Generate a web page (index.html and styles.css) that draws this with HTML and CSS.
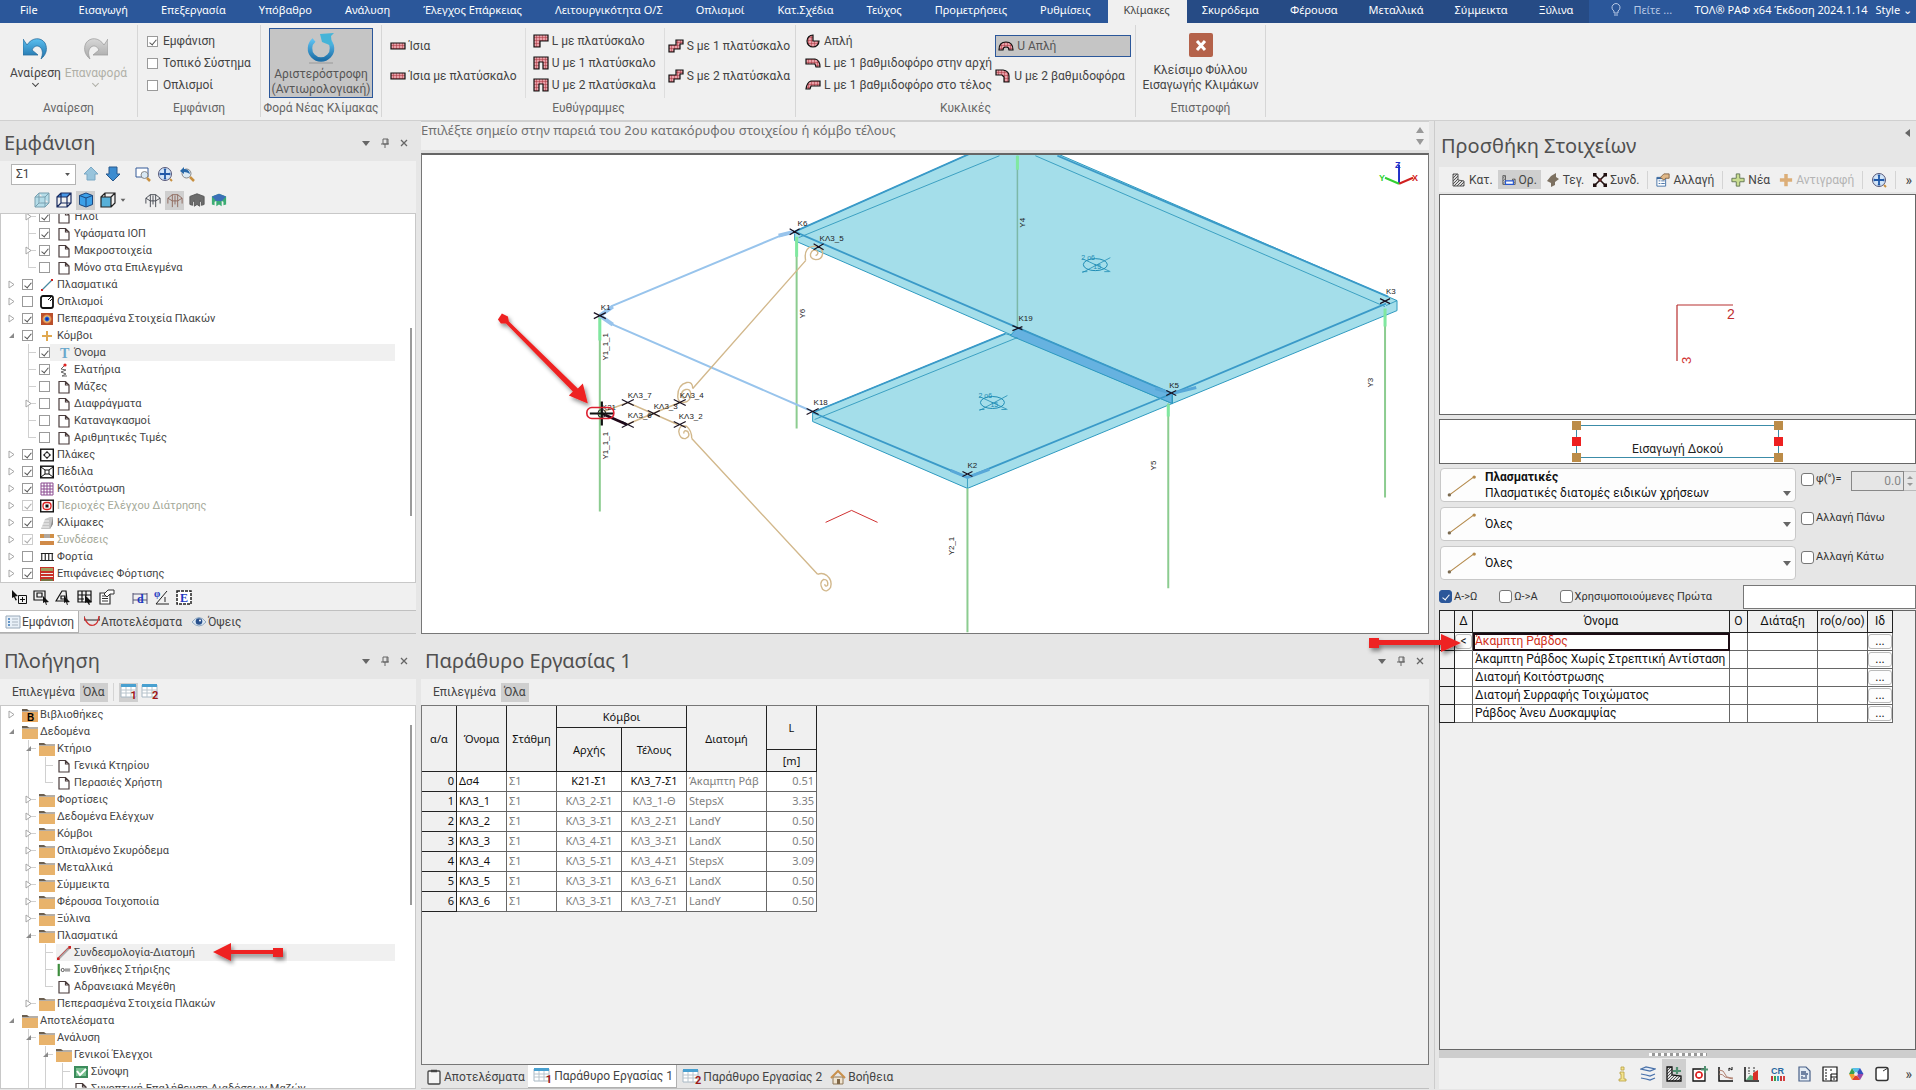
FILE: index.html
```html
<!DOCTYPE html>
<html lang="el">
<head>
    <meta charset="UTF-8">
    <meta name="viewport" content="width=device-width, initial-scale=1.0">
    <title>ΤΟΛ ΡΑΦ - Κλίμακες</title>
    <link rel="stylesheet" href="styles.css">
</head>
<body>
    <!-- gradients, patterns, filters -->
    <svg class="defs" width="0" height="0">
        <defs>
            <linearGradient id="g-blue" x1="0" y1="0" x2="0" y2="1"><stop offset="0" stop-color="#5cc0f0"/><stop offset="1" stop-color="#1d6fa8"/></linearGradient>
            <linearGradient id="g-gray" x1="0" y1="0" x2="0" y2="1"><stop offset="0" stop-color="#d8d8d8"/><stop offset="1" stop-color="#a8a8a8"/></linearGradient>
            <radialGradient id="g-heat"><stop offset="0" stop-color="#001a80"/><stop offset=".35" stop-color="#1d5be0"/><stop offset=".6" stop-color="#e8c070"/><stop offset="1" stop-color="#c84a28"/></radialGradient>
            <pattern id="p-brick" width="3" height="3" patternUnits="userSpaceOnUse"><rect width="3" height="3" fill="#e8a0a8"/><path d="M0 0h3M0 0v3" stroke="#a8323c" stroke-width="1"/></pattern>
            <pattern id="p-hatch" width="3" height="3" patternUnits="userSpaceOnUse"><rect width="3" height="3" fill="#ddd"/><path d="M0 3L3 0" stroke="#555"/></pattern>
            <filter id="shadow" x="-20%" y="-20%" width="140%" height="160%"><feDropShadow dx="2" dy="3" stdDeviation="2" flood-opacity=".45"/></filter>
        </defs>
    </svg>
    <!-- icon symbols -->
    <svg class="symbols">
        <symbol id="tw-closed" viewBox="0 0 9 9"><path d="M2 1v7l5-3.500z" fill="#fff" stroke="#a6a6a6"/></symbol>
        <symbol id="tw-open" viewBox="0 0 9 9"><path d="M7 2v5H2z" fill="#8a8a8a"/></symbol>
        <symbol id="doc" viewBox="0 0 14 14"><path d="M2 1.500h6.500l3.500 3.500v8H2zM8.500 1.500V5H12" fill="#fff" stroke="#4a3c3c" stroke-width="1.200"/></symbol>
        <symbol id="folder" viewBox="0 0 16 14"><path d="M0 3.500V1h5l2 1.500h9v1z" fill="#6b5f50"/><path d="M0 4h16v10H0z" fill="#e8b36c"/></symbol>
        <symbol id="folder-b" viewBox="0 0 16 14"><path d="M0 3.500V1h5l2 1.500h9v1z" fill="#6b5f50"/><path d="M0 4h16v10H0z" fill="#e8a860"/><text x="5" y="13" font-size="10" font-weight="bold" font-family="Liberation Sans">B</text></symbol>
        <symbol id="member" viewBox="0 0 14 14"><path d="M2 12L12 2" stroke="#4a8aa0" stroke-width="1.300"/><path d="M1 11h2v2H1zM11 1h2v2h-2z" fill="#c22"/></symbol>
        <symbol id="member2" viewBox="0 0 16 16"><path d="M2 14L14 2" stroke="#aaa" stroke-width="3"/><path d="M1 14L13 2" stroke="#c44" stroke-width="1"/><path d="M0 13h3v3H0zM13 0h3v3h-3z" fill="#c22"/></symbol>
        <symbol id="rebar" viewBox="0 0 14 14"><rect x="1" y="1" width="12" height="12" rx="2" fill="#fff" stroke="#111" stroke-width="1.800"/><path d="M8 5l4-4M10 6l2-2" stroke="#111"/></symbol>
        <symbol id="heat" viewBox="0 0 14 14"><rect x="1" y="1" width="12" height="12" fill="#b8502c"/><circle cx="7" cy="7" r="5" fill="url(#g-heat)"/></symbol>
        <symbol id="plus-o" viewBox="0 0 14 14"><path d="M7 2v10M2 7h10" stroke="#e0a850" stroke-width="2"/></symbol>
        <symbol id="letter-t" viewBox="0 0 14 14"><text x="3" y="12" font-size="14" font-weight="bold" fill="#6aa8cc" font-family="Liberation Serif">T</text></symbol>
        <symbol id="spring" viewBox="0 0 14 14"><path d="M7 3L4 6l5 1-5 2 5 2-4 2h5" fill="none" stroke="#666"/><circle cx="8" cy="2" r="1.600" fill="#d22"/></symbol>
        <symbol id="slab" viewBox="0 0 14 14"><rect x=".7" y="1.200" width="12.600" height="11.600" fill="#fff" stroke="#111" stroke-width="1.400"/><circle cx="7" cy="7" r="2.500" fill="none" stroke="#111"/><path d="M7 3v2M7 9v2M3 7h2M9 7h2" stroke="#111"/></symbol>
        <symbol id="foot" viewBox="0 0 14 14"><rect x=".7" y="1.200" width="12.600" height="11.600" fill="#fff" stroke="#111" stroke-width="1.400"/><path d="M1 2l4 3M13 2L9 5M1 12l4-3M13 12L9 9M5 5h4v4H5z" fill="none" stroke="#111"/></symbol>
        <symbol id="grid" viewBox="0 0 14 14"><path d="M1 1v12M4 1v12M7 1v12M10 1v12M13 1v12M1 1h12M1 4h12M1 7h12M1 10h12M1 13h12" stroke="#8a4a90"/></symbol>
        <symbol id="punch" viewBox="0 0 14 14"><rect x=".7" y="1.200" width="12.600" height="11.600" fill="#fff" stroke="#111" stroke-width="1.400"/><rect x="3" y="3.500" width="8" height="7" rx="3" fill="none" stroke="#d22" stroke-width="1.300"/><path d="M5.500 5.500h3v3h-3z" fill="#111"/></symbol>
        <symbol id="stair" viewBox="0 0 14 14"><path d="M1 13L5 3l5-2h3v7l-3 5z" fill="#c4c4c4"/><path d="M4 5h5M3 8h6M2 11h7" stroke="#f4f4f4"/><path d="M10 13l3-5V1z" fill="#8c8c8c"/></symbol>
        <symbol id="joint" viewBox="0 0 14 14"><path d="M0 1h14v4H0z" fill="#d09048"/><path d="M4 1h6v4H4z" fill="#b0a8a0"/><path d="M0 8h14v4H0z" fill="#d08a48"/></symbol>
        <symbol id="load" viewBox="0 0 16 14"><path d="M1 3h14M2 3v8M6 3v8M10 3v8M14 3v8M0 11h16" stroke="#222" stroke-width="1.300"/></symbol>
        <symbol id="loadsurf" viewBox="0 0 14 14"><path d="M0 0h14v14H0z" fill="#c83028"/><path d="M1 1h12v3H1z" fill="#a0a060"/><path d="M1 6h12v1H1zM1 9h12v1H1z" fill="#eee"/><path d="M1 12h12v2H1z" fill="#774"/></symbol>
        <symbol id="support" viewBox="0 0 16 16"><path d="M2 1v14" stroke="#3c8c3c" stroke-width="2.500"/><circle cx="6.500" cy="8" r="1.800" fill="none" stroke="#444"/><path d="M9 7h6M9 9h6" stroke="#555"/></symbol>
        <symbol id="okpic" viewBox="0 0 14 14"><path d="M0 1h14v12H0z" fill="#3c8c5c"/><path d="M2 3h10v8H2z" fill="#78c090"/><path d="M3 6l3 4 6-6" fill="none" stroke="#fff" stroke-width="2"/></symbol>
        <symbol id="undo" viewBox="0 0 24 24"><path d="M0 2l4 6C9 0 18 0 22 6c3 6 1 12-4 16 2-5 2-9-1-12-3-2-6-1-8 3l6 5H0z" fill="url(#g-blue)" stroke="#2b6ea0" stroke-width=".8"/></symbol>
        <symbol id="redo" viewBox="0 0 24 24"><path d="M24 2l-4 6C15 0 6 0 2 6c-3 6-1 12 4 16-2-5-2-9 1-12 3-2 6-1 8 3l-6 5h15z" fill="url(#g-gray)" stroke="#a0a0a0" stroke-width=".8"/></symbol>
        <symbol id="rotate" viewBox="0 0 32 32"><path d="M9 8a11 11 0 1 0 14 0" fill="none" stroke="url(#g-blue)" stroke-width="4.500"/><path d="M15 2l14-1-3 3 1 10-10-4z" fill="#46b4d8"/><path d="M4 31h24" stroke="#999" stroke-width="1"/></symbol>
        <symbol id="s-flat" viewBox="0 0 16 14"><path d="M1 4h14v6H1z" fill="url(#p-brick)" stroke="#111" stroke-width="1.200"/></symbol>
        <symbol id="s-l" viewBox="0 0 16 14"><path d="M1 1h14v6H7v6H1z" fill="url(#p-brick)" stroke="#111" stroke-width="1.200"/></symbol>
        <symbol id="s-u" viewBox="0 0 16 14"><path d="M1 1h14v12h-5V6H6v7H1z" fill="url(#p-brick)" stroke="#111" stroke-width="1.200"/></symbol>
        <symbol id="s-s" viewBox="0 0 16 14"><path d="M15 1H8v5H1v7h5v-3h6V5h3z" fill="url(#p-brick)" stroke="#111" stroke-width="1.200"/></symbol>
        <symbol id="s-c" viewBox="0 0 16 14"><path d="M8 1a6 6 0 1 0 6 6H8z" fill="url(#p-brick)" stroke="#111" stroke-width="1.200"/></symbol>
        <symbol id="s-cl" viewBox="0 0 16 14"><path d="M1 3h9q5 1 5 8h-4l-1-3H1z" fill="url(#p-brick)" stroke="#111" stroke-width="1.200"/></symbol>
        <symbol id="s-cr" viewBox="0 0 16 14"><path d="M15 3H6Q2 4 1 11h4l1-3h9z" fill="url(#p-brick)" stroke="#111" stroke-width="1.200"/></symbol>
        <symbol id="s-arc" viewBox="0 0 16 14"><path d="M1 11q0-8 7-8t7 8h-4q0-3-3-3t-3 3z" fill="url(#p-brick)" stroke="#111" stroke-width="1.200"/></symbol>
        <symbol id="s-q" viewBox="0 0 16 14"><path d="M1 1h7q6 1 6 6v6H9V8L7 6H1z" fill="url(#p-brick)" stroke="#111" stroke-width="1.200"/></symbol>
        <symbol id="close" viewBox="0 0 24 24"><rect width="24" height="24" rx="2" fill="#b4624a"/><path d="M8 8l8 9M16 8l-8 9" stroke="#fff" stroke-width="3"/></symbol>
        <symbol id="bulb" viewBox="0 0 12 14"><path d="M4 10V8a4 4 0 1 1 4 0v2zM4 12h4" fill="none" stroke="#b8c8e4"/></symbol>
        <symbol id="caret" viewBox="0 0 10 10"><path d="M1 3h8L5 8z" fill="#666"/></symbol>
        <symbol id="pin" viewBox="0 0 10 10"><path d="M3 1h5v5H3zM1 6h8M5 6v4M7 1v5" fill="none" stroke="#666"/></symbol>
        <symbol id="x" viewBox="0 0 10 10"><path d="M2 2l6 6M8 2L2 8" stroke="#666" stroke-width="1.300"/></symbol>
        <symbol id="up" viewBox="0 0 16 16"><path d="M8 1l7 7h-3v6H4V8H1z" fill="#98c4dc" stroke="#7aa8c4"/></symbol>
        <symbol id="down" viewBox="0 0 16 16"><path d="M8 15L1 8h3V1h8v7h3z" fill="#3c8cd0" stroke="#28588c"/></symbol>
        <symbol id="zoomwin" viewBox="0 0 16 16"><path d="M1 2h12v9H1z" fill="#fff" stroke="#345a98"/><circle cx="9.500" cy="9" r="3.500" fill="#d8e8f4" stroke="#888"/><path d="M12 12l3 3" stroke="#c89040" stroke-width="2.500"/></symbol>
        <symbol id="zoomall" viewBox="0 0 16 16"><circle cx="8" cy="8" r="6.500" fill="#d0e4f8" stroke="#557"/><path d="M8 3v10M3 8h10" stroke="#2058a8" stroke-width="1.800"/><path d="M6.500 4L8 2l1.500 2zM6.500 12L8 14l1.500-2zM4 6.500L2 8l2 1.500zM12 6.500L14 8l-2 1.500z" fill="#2058a8"/><path d="M13 13l2 2" stroke="#c89040" stroke-width="2"/></symbol>
        <symbol id="zoomprev" viewBox="0 0 16 16"><circle cx="7.500" cy="7.500" r="4.500" fill="#dceaf4" stroke="#888"/><path d="M11 11l4 4" stroke="#c89040" stroke-width="2.500"/><path d="M1 5l4-4v2q5 0 6 5-3-2-6-2v2z" fill="#2868a8"/></symbol>
        <symbol id="cube-g" viewBox="0 0 16 16"><path d="M1 5h10v10H1zM1 5l4-4h10v10l-4 4M11 5l4-4M5 1v10H15M5 11l-4 4" fill="#b4dce8" stroke="#78a0b0"/></symbol>
        <symbol id="cube-w" viewBox="0 0 16 16"><path d="M1 5l4-4h10l-4 4z" fill="#4898e8"/><path d="M1 5h10v10H1zM1 5l4-4h10v10l-4 4M11 5l4-4M5 1v10H15M5 11l-4 4" fill="none" stroke="#1a2c60" stroke-width="1.200"/></symbol>
        <symbol id="cube-b" viewBox="0 0 16 16"><path d="M8 1l6.500 2.500v9L8 15l-6.500-2.500v-9z" fill="#3ca0e8" stroke="#1c4880"/><path d="M1.500 3.500L8 6l6.500-2.500M8 6v9" fill="none" stroke="#1c4880"/></symbol>
        <symbol id="cube-f" viewBox="0 0 16 16"><path d="M1 5h10v10H1z" fill="#58b0d8"/><path d="M1 5h10v10H1zM1 5l4-4h10v10l-4 4M11 5l4-4M5 1v4" fill="none" stroke="#222" stroke-width="1.200"/></symbol>
        <symbol id="frame" viewBox="0 0 18 16"><path d="M1 6l5-4h6l5 4-5 3H6zM1 6v6M6 9v7M12 9v7M17 6v6M6 2v7M12 2v7M9 3v10" fill="none" stroke="#3c4048"/></symbol>
        <symbol id="frame-r" viewBox="0 0 18 16"><path d="M1 6l5-4h6l5 4-5 3H6zM1 6v6M6 9v7M12 9v7M17 6v6M6 2v7M12 2v7M9 3v10" fill="none" stroke="#8c6458"/></symbol>
        <symbol id="solid" viewBox="0 0 18 16"><path d="M1 4l8-3 8 3v9l-3 1v-4l-2-1v6l-3-2-3 2V9l-2 1v4l-3-1z" fill="#6c6c6c" stroke="#555"/></symbol>
        <symbol id="solid-g" viewBox="0 0 18 16"><path d="M1 4l8-3 8 3v9l-3 1v-4l-2-1v6l-3-2-3 2V9l-2 1v4l-3-1z" fill="#3cac74"/><path d="M1 4l8-3 8 3-5 5H6z" fill="#3c70b8"/></symbol>
        <symbol id="sel1" viewBox="0 0 16 16"><path d="M1 1l6 6-3 .5L6 11 4.500 11.500 3 8 1 9z" fill="#111"/><path d="M7.500 6.500h8v8h-8zM11.500 8v5M9 10.500h5" fill="none" stroke="#111"/></symbol>
        <symbol id="sel2" viewBox="0 0 16 16"><path d="M1 2h11v9H1zM4 4h5v4H4z" fill="none" stroke="#111" stroke-width="1.200"/><path d="M10 7l6 6-3 .5 1 2-1 .5-1-3-2 1z" fill="#111"/></symbol>
        <symbol id="sel3" viewBox="0 0 16 16"><path d="M1 12L7 2h4l1 10zM6 7h4v3H6z" fill="none" stroke="#111" stroke-width="1.200"/><path d="M9 7l6 6-3 .5 1 2-1 .5-1-3-2 1z" fill="#111"/></symbol>
        <symbol id="sel4" viewBox="0 0 16 16"><path d="M1 2h13v11H1zM5 2v11M9 2v5M1 6h13M1 10h6" fill="none" stroke="#111" stroke-width="1.200"/><path d="M8 6l7 7-3 .5 1 2-1 .5-2-3-2 1z" fill="#111"/></symbol>
        <symbol id="props" viewBox="0 0 16 16"><path d="M1 4h10v11H1zM3 7h6M3 9.500h6M3 12h6" fill="#fff" stroke="#333" stroke-width="1.200"/><path d="M5 5l4-4h6v4h-4l-3 3z" fill="#fff" stroke="#333"/></symbol>
        <symbol id="props-c" viewBox="0 0 16 16"><path d="M1 5h10v10H1z" fill="#fff" stroke="#3868a0"/><path d="M1 5h10v2H1z" fill="#3868a0"/><path d="M3 9h2M6 9h4M3 12h2M6 12h4" stroke="#3868a0"/><path d="M5 5l4-4h6v5h-4l-2 2z" fill="#e0b888" stroke="#806040"/></symbol>
        <symbol id="dim" viewBox="0 0 16 16"><path d="M1 4v11M15 4v11M1 5h14M1 11h14" stroke="#557" fill="none"/><text x="5" y="14" font-size="12" font-weight="bold" fill="#2038c0" font-family="Liberation Serif">d</text></symbol>
        <symbol id="phi" viewBox="0 0 16 16"><text x="0" y="8" font-size="10" font-weight="bold" fill="#2038c0" font-family="Liberation Serif">φ</text><path d="M2 15L13 2M2 15h13M11 8v5" stroke="#222"/></symbol>
        <symbol id="ebox" viewBox="0 0 16 16"><path d="M1 2h14v13H1z" fill="#fff" stroke="#222" stroke-width="1.500" stroke-dasharray="3 1"/><text x="4" y="13" font-size="12" font-weight="bold" fill="#2038c0" font-family="Liberation Serif">E</text></symbol>
        <symbol id="list" viewBox="0 0 16 14"><path d="M1 1h14v12H1z" fill="#e8f0f8" stroke="#98a8b8"/><path d="M3 4h2M3 7h2M3 10h2" stroke="#3878b8" stroke-width="1.500"/><path d="M7 4h6M7 7h6M7 10h6" stroke="#a8b4c0"/></symbol>
        <symbol id="moment" viewBox="0 0 16 14"><path d="M0 1v4h16V1" fill="none" stroke="#222"/><path d="M0 2q4 10 10 8 4-1 5-9" fill="none" stroke="#d03030" stroke-width="1.300"/></symbol>
        <symbol id="eye" viewBox="0 0 16 14"><path d="M1 7q7-9 14 0-7 8-14 0z" fill="#dce8f4" stroke="#90a8c0"/><circle cx="8" cy="6.500" r="3.300" fill="#28508c"/><circle cx="9" cy="5.500" r="1" fill="#fff"/></symbol>
        <symbol id="tbl" viewBox="0 0 18 18"><path d="M1 2h15v12H1z" fill="#fff" stroke="#a8b8c4"/><path d="M1 1h15v3H1z" fill="#48a0d0"/><path d="M1 7h15M1 10h15M6 4v10M11 4v10" stroke="#b8c4cc"/></symbol>
        <symbol id="home" viewBox="0 0 16 16"><path d="M3 8h10v7H3z" fill="#f0e4d0" stroke="#907858"/><path d="M1 9l7-7 7 7" fill="none" stroke="#c8904c" stroke-width="2"/><path d="M7 10h3v5H7z" fill="#806848"/></symbol>
        <symbol id="col" viewBox="0 0 14 14"><path d="M1 1h5v6l6 1v5H1z" fill="url(#p-hatch)" stroke="#555"/></symbol>
        <symbol id="hor" viewBox="0 0 16 14"><path d="M1 2h3v10H1zM12 6h3v6h-3z" fill="url(#p-hatch)" stroke="#555"/><path d="M4 12V8h9v4z" fill="#fff" stroke="#2858d0" stroke-width="1.300"/></symbol>
        <symbol id="roof" viewBox="0 0 14 14"><path d="M5 3l5-3v4l3 2-4 3v3l-4 2v-4L1 8z" fill="#7c7060"/></symbol>
        <symbol id="conn" viewBox="0 0 16 16"><path d="M2 2l12 12M14 2L2 14" stroke="#201010" stroke-width="1.800"/><path d="M0 0h4v4H0zM12 0h4v4h-4zM0 12h4v4H0zM12 12h4v4h-4z" fill="#201010"/><circle cx="8" cy="8" r="2" fill="#602020"/></symbol>
        <symbol id="add" viewBox="0 0 16 16"><path d="M6 1h4v5h5v4h-5v5H6v-5H1V6h5z" fill="#c8dc90" stroke="#5c7050"/></symbol>
        <symbol id="add-o" viewBox="0 0 16 16"><path d="M6 1h4v5h5v4h-5v5H6v-5H1V6h5z" fill="#dcae78"/></symbol>
        <symbol id="info" viewBox="0 0 16 16"><path d="M7 1h3v3H7zM6 6h4v7h2v2H5v-2h2V8H6z" fill="#f4e490" stroke="#b8a040" stroke-width=".8"/></symbol>
        <symbol id="layers" viewBox="0 0 16 16"><path d="M1 3l5-2 9 2-5 2zM1 8l5 1 4 1 5-2M1 12l5 1 4 1 5-2" fill="#e4ecf8" stroke="#4870a8" stroke-width="1.200"/></symbol>
        <symbol id="sec-add" viewBox="0 0 16 16"><path d="M1 1h5v8l9 1v5H1z" fill="url(#p-hatch)" stroke="#111" stroke-width="1.300"/><path d="M11 1v7M7 5h8" stroke="#509070" stroke-width="2.200"/></symbol>
        <symbol id="slab-add" viewBox="0 0 16 16"><path d="M1 3h12v12H1z" fill="#fff" stroke="#111" stroke-width="1.300"/><circle cx="7" cy="9" r="3" fill="none" stroke="#d22" stroke-width="1.500"/><path d="M7 5v2M7 11v2M3 9h2M9 9h2" stroke="#d22"/><path d="M13 0v7M9 3.500h7" stroke="#509070" stroke-width="2"/></symbol>
        <symbol id="curve" viewBox="0 0 16 16"><path d="M1 1v14h14" fill="none" stroke="#111" stroke-width="1.500"/><path d="M1 4q5 0 6 4t8 4M1 8q4 0 6 3l8 2" fill="none" stroke="#b08070"/><path d="M11 5V2l3 2V1" fill="none" stroke="#111"/></symbol>
        <symbol id="chart" viewBox="0 0 16 16"><path d="M1 1v14h14" fill="none" stroke="#111" stroke-width="1.500"/><path d="M2 14l4-5 3 1v4z" fill="#60b080"/><path d="M9 7l5-3v10H9z" fill="#d83028"/><path d="M5 1v7M10 1v5" stroke="#333" stroke-dasharray="2 1"/></symbol>
        <symbol id="cr" viewBox="0 0 16 16"><text x="1" y="8" font-size="9" font-weight="bold" fill="#2868a0" font-family="Liberation Sans">CR</text><path d="M1 10h2v5H1zM10 10h2v5h-2z" fill="#c83838"/><path d="M4 10h2v5H4z" fill="#38a048"/><path d="M7 10h2v5H7z" fill="#38a0c0"/><path d="M13 10h2v5h-2z" fill="#d84040"/></symbol>
        <symbol id="page" viewBox="0 0 16 16"><path d="M3 1h7l4 4v10H3z" fill="#e4ecf4" stroke="#486088" stroke-width="1.200"/><path d="M5 6h5M5 8h7M6 13v-3M8 13v-2M10 13V9" stroke="#486088" stroke-width="1.300"/></symbol>
        <symbol id="sheet" viewBox="0 0 16 16"><path d="M1 1h14v14H1zM9 8v7M9 8h6M9 11h6" fill="#fff" stroke="#111" stroke-width="1.200"/><path d="M3 4h3M8 4h3M3 7h3M3 10h3M3 13h3M11 13h3" stroke="#111" stroke-dasharray="2 1"/></symbol>
        <symbol id="color" viewBox="0 0 16 16"><path d="M8 8L1 8l3-6z" fill="#38a050"/><path d="M8 8L4 2h8z" fill="#58c0e8"/><path d="M8 8l4-6 3.500 6z" fill="#3050c0"/><path d="M8 8h7.500L12 14z" fill="#9848a8"/><path d="M8 8l4 6H4z" fill="#e04030"/><path d="M8 8l-4 6L1 8z" fill="#f0a030"/><circle cx="8" cy="8" r="2" fill="#fff" opacity=".8"/></symbol>
        <symbol id="box" viewBox="0 0 16 16"><rect x="2" y="1.500" width="12" height="13" rx="2" fill="#fff" stroke="#333" stroke-width="1.500"/><path d="M9 5l5-3" stroke="#333"/></symbol>
        <symbol id="clipboard" viewBox="0 0 16 16"><rect x="2" y="2" width="12" height="13" rx="1" fill="#f4f4f4" stroke="#444" stroke-width="1.300"/><path d="M5 2h6" stroke="#444" stroke-width="2.500"/></symbol>
        <symbol id="diag" viewBox="0 0 32 24"><path d="M2 22L29 2" stroke="#b48a4c" stroke-width="1.300"/><circle cx="2.500" cy="21.500" r="1.800" fill="#7a6a50"/><circle cx="29" cy="2.500" r="1.800" fill="#b48a4c"/></symbol>
        <symbol id="red-arrow" viewBox="0 0 96 24"><path d="M2 7h10v2h62V3l20 9-20 9v-7H12v3H2z" fill="#ee2222"/></symbol>
        <symbol id="slabmark" viewBox="0 0 32 20"><ellipse cx="15" cy="11" rx="12" ry="6" fill="none" stroke="#1e8cb4"/><path d="M2 19L30 4M2 5l28 13M2 18h5M24 18h5" stroke="#1e8cb4" stroke-width=".8"/><text x="1" y="6" font-size="7" fill="#1e8cb4" font-family="Liberation Sans">2 ο6</text><text x="13" y="15" font-size="7" fill="#1e8cb4" font-family="Liberation Sans">15</text></symbol>
    </svg>

    <nav class="tabs">
        <a href="#">File</a>
        <a href="#">Εισαγωγή</a>
        <a href="#">Επεξεργασία</a>
        <a href="#">Υπόβαθρο</a>
        <a href="#">Ανάλυση</a>
        <a href="#">Έλεγχος Επάρκειας</a>
        <a href="#">Λειτουργικότητα Ο/Σ</a>
        <a href="#">Οπλισμοί</a>
        <a href="#">Κατ.Σχέδια</a>
        <a href="#">Τεύχος</a>
        <a href="#">Προμετρήσεις</a>
        <a href="#">Ρυθμίσεις</a>
        <a href="#" class="active">Κλίμακες</a>
        <a href="#" class="ctx">Σκυρόδεμα</a>
        <a href="#" class="ctx">Φέρουσα</a>
        <a href="#" class="ctx">Μεταλλικά</a>
        <a href="#" class="ctx">Σύμμεικτα</a>
        <a href="#" class="ctx">Ξύλινα</a>
        <span class="tell-me"><svg class="i14"><use href="#bulb"/></svg>Πείτε ...</span>
        <span class="app-name">ΤΟΛ® ΡΑΦ x64 Έκδοση 2024.1.14</span>
        <button class="style-btn">Style ⌄</button>
    </nav>

    <section class="ribbon">
        <div class="group g-undo">
            <div class="group-body">
                <button class="big"><svg class="i24"><use href="#undo"/></svg>Αναίρεση<span class="chev"></span></button>
                <button class="big" disabled><svg class="i24"><use href="#redo"/></svg>Επαναφορά<span class="chev"></span></button>
            </div>
            <h3>Αναίρεση</h3>
        </div>
        <div class="group g-view">
            <div class="group-body">
                <div class="stack">
                    <label><input type="checkbox" checked>Εμφάνιση</label>
                    <label><input type="checkbox">Τοπικό Σύστημα</label>
                    <label><input type="checkbox">Οπλισμοί</label>
                </div>
            </div>
            <h3>Εμφάνιση</h3>
        </div>
        <div class="group g-dir">
            <div class="group-body">
                <button class="big pressed"><svg class="i32"><use href="#rotate"/></svg>Αριστερόστροφη<br>(Αντιωρολογιακή)</button>
            </div>
            <h3>Φορά Νέας Κλίμακας</h3>
        </div>
        <div class="group g-straight">
            <div class="group-body">
                <div class="stack two">
                    <button class="small"><svg class="i16"><use href="#s-flat"/></svg>Ίσια</button>
                    <button class="small"><svg class="i16"><use href="#s-flat"/></svg>Ίσια με πλατύσκαλο</button>
                </div>
                <div class="stack split">
                    <button class="small"><svg class="i16"><use href="#s-l"/></svg>L με πλατύσκαλο</button>
                    <button class="small"><svg class="i16"><use href="#s-u"/></svg>U με 1 πλατύσκαλο</button>
                    <button class="small"><svg class="i16"><use href="#s-u"/></svg>U με 2 πλατύσκαλα</button>
                </div>
                <div class="stack two split">
                    <button class="small"><svg class="i16"><use href="#s-s"/></svg>S με 1 πλατύσκαλο</button>
                    <button class="small"><svg class="i16"><use href="#s-s"/></svg>S με 2 πλατύσκαλα</button>
                </div>
            </div>
            <h3>Ευθύγραμμες</h3>
        </div>
        <div class="group g-round">
            <div class="group-body">
                <div class="stack">
                    <button class="small"><svg class="i16"><use href="#s-c"/></svg>Απλή</button>
                    <button class="small"><svg class="i16"><use href="#s-cl"/></svg>L με 1 βαθμιδοφόρο στην αρχή</button>
                    <button class="small"><svg class="i16"><use href="#s-cr"/></svg>L με 1 βαθμιδοφόρο στο τέλος</button>
                </div>
                <div class="stack two grow">
                    <button class="small pressed"><svg class="i16"><use href="#s-arc"/></svg>U Απλή</button>
                    <button class="small"><svg class="i16"><use href="#s-q"/></svg>U με 2 βαθμιδοφόρα</button>
                </div>
            </div>
            <h3>Κυκλικές</h3>
        </div>
        <div class="group g-back">
            <div class="group-body">
                <button class="big"><svg class="i24"><use href="#close"/></svg>Κλείσιμο Φύλλου<br>Εισαγωγής Κλιμάκων</button>
            </div>
            <h3>Επιστροφή</h3>
        </div>
    </section>

    <main class="workspace">
        <!-- left: display panel -->
        <section class="panel display">
            <header class="title"><h2>Εμφάνιση</h2><button aria-label="Μενού"><svg class="i10"><use href="#caret"/></svg></button><button aria-label="Καρφίτσωμα"><svg class="i10"><use href="#pin"/></svg></button><button aria-label="Κλείσιμο"><svg class="i10"><use href="#x"/></svg></button></header>
            <div class="toolbar level-bar">
                <select aria-label="Στάθμη"><option>Σ1</option></select>
                <button aria-label="Πάνω"><svg class="i16"><use href="#up"/></svg></button>
                <button aria-label="Κάτω"><svg class="i16"><use href="#down"/></svg></button>
                <i class="space"></i>
                <button aria-label="Ζουμ παράθυρο"><svg class="i16"><use href="#zoomwin"/></svg></button>
                <button aria-label="Ζουμ όλα"><svg class="i16"><use href="#zoomall"/></svg></button>
                <button aria-label="Προηγούμενο ζουμ"><svg class="i16"><use href="#zoomprev"/></svg></button>
            </div>
            <div class="toolbar cube-bar">
                <button aria-label="Διαφανές"><svg class="i16"><use href="#cube-g"/></svg></button>
                <button aria-label="Σύρμα"><svg class="i16"><use href="#cube-w"/></svg></button>
                <button aria-label="Στερεό" class="on"><svg class="i16"><use href="#cube-b"/></svg></button>
                <button aria-label="Όψη"><svg class="i16"><use href="#cube-f"/></svg></button>
                <svg class="i6"><use href="#caret"/></svg>
                <i class="space"></i>
                <button aria-label="Πλαίσιο"><svg class="i16"><use href="#frame"/></svg></button>
                <button aria-label="Πλαίσιο με κόμβους" class="on"><svg class="i16"><use href="#frame-r"/></svg></button>
                <button aria-label="Όγκοι"><svg class="i16"><use href="#solid"/></svg></button>
                <button aria-label="Φωτορεαλιστικό"><svg class="i16"><use href="#solid-g"/></svg></button>
            </div>
            <div class="tree checks">
                <ul>
                    <li>
                        <ul>
                            <li><label class="node"><svg class="tw"><use href="#tw-closed"/></svg><input type="checkbox" checked><span class="text"><svg class="i14"><use href="#doc"/></svg>Ήλοι</span></label></li>
                            <li><label class="node"><i class="tw"></i><input type="checkbox" checked><span class="text"><svg class="i14"><use href="#doc"/></svg>Υφάσματα ΙΟΠ</span></label></li>
                            <li><label class="node"><svg class="tw"><use href="#tw-closed"/></svg><input type="checkbox" checked><span class="text"><svg class="i14"><use href="#doc"/></svg>Μακροστοιχεία</span></label></li>
                            <li><label class="node"><i class="tw"></i><input type="checkbox"><span class="text"><svg class="i14"><use href="#doc"/></svg>Μόνο στα Επιλεγμένα</span></label></li>
                        </ul>
                    </li>
                    <li><label class="node"><svg class="tw"><use href="#tw-closed"/></svg><input type="checkbox" checked><span class="text"><svg class="i14"><use href="#member"/></svg>Πλασματικά</span></label></li>
                    <li><label class="node"><svg class="tw"><use href="#tw-closed"/></svg><input type="checkbox"><span class="text"><svg class="i14"><use href="#rebar"/></svg>Οπλισμοί</span></label></li>
                    <li><label class="node"><svg class="tw"><use href="#tw-closed"/></svg><input type="checkbox" checked><span class="text"><svg class="i14"><use href="#heat"/></svg>Πεπερασμένα Στοιχεία Πλακών</span></label></li>
                    <li><label class="node"><svg class="tw"><use href="#tw-open"/></svg><input type="checkbox" checked><span class="text"><svg class="i14"><use href="#plus-o"/></svg>Κόμβοι</span></label>
                        <ul>
                            <li><label class="node selected"><i class="tw"></i><input type="checkbox" checked><span class="text"><svg class="i14"><use href="#letter-t"/></svg>Όνομα</span></label></li>
                            <li><label class="node"><i class="tw"></i><input type="checkbox" checked><span class="text"><svg class="i14"><use href="#spring"/></svg>Ελατήρια</span></label></li>
                            <li><label class="node"><i class="tw"></i><input type="checkbox"><span class="text"><svg class="i14"><use href="#doc"/></svg>Μάζες</span></label></li>
                            <li><label class="node"><svg class="tw"><use href="#tw-closed"/></svg><input type="checkbox"><span class="text"><svg class="i14"><use href="#doc"/></svg>Διαφράγματα</span></label></li>
                            <li><label class="node"><i class="tw"></i><input type="checkbox"><span class="text"><svg class="i14"><use href="#doc"/></svg>Καταναγκασμοί</span></label></li>
                            <li><label class="node"><i class="tw"></i><input type="checkbox"><span class="text"><svg class="i14"><use href="#doc"/></svg>Αριθμητικές Τιμές</span></label></li>
                        </ul>
                    </li>
                    <li><label class="node"><svg class="tw"><use href="#tw-closed"/></svg><input type="checkbox" checked><span class="text"><svg class="i14"><use href="#slab"/></svg>Πλάκες</span></label></li>
                    <li><label class="node"><svg class="tw"><use href="#tw-closed"/></svg><input type="checkbox" checked><span class="text"><svg class="i14"><use href="#foot"/></svg>Πέδιλα</span></label></li>
                    <li><label class="node"><svg class="tw"><use href="#tw-closed"/></svg><input type="checkbox" checked><span class="text"><svg class="i14"><use href="#grid"/></svg>Κοιτόστρωση</span></label></li>
                    <li><label class="node off"><svg class="tw"><use href="#tw-closed"/></svg><input type="checkbox" checked disabled><span class="text"><svg class="i14"><use href="#punch"/></svg>Περιοχές Ελέγχου Διάτρησης</span></label></li>
                    <li><label class="node"><svg class="tw"><use href="#tw-closed"/></svg><input type="checkbox" checked><span class="text"><svg class="i14"><use href="#stair"/></svg>Κλίμακες</span></label></li>
                    <li><label class="node off"><svg class="tw"><use href="#tw-closed"/></svg><input type="checkbox" checked disabled><span class="text"><svg class="i14"><use href="#joint"/></svg>Συνδέσεις</span></label></li>
                    <li><label class="node"><svg class="tw"><use href="#tw-closed"/></svg><input type="checkbox"><span class="text"><svg class="i14"><use href="#load"/></svg>Φορτία</span></label></li>
                    <li><label class="node"><svg class="tw"><use href="#tw-closed"/></svg><input type="checkbox" checked><span class="text"><svg class="i14"><use href="#loadsurf"/></svg>Επιφάνειες Φόρτισης</span></label></li>
                </ul>
                <i class="thumb"></i>
            </div>
            <div class="toolbar select-bar">
                <button aria-label="Επιλογή"><svg class="i16"><use href="#sel1"/></svg></button>
                <button aria-label="Επιλογή παραθύρου"><svg class="i16"><use href="#sel2"/></svg></button>
                <button aria-label="Επιλογή πολυγώνου"><svg class="i16"><use href="#sel3"/></svg></button>
                <button aria-label="Επιλογή πίνακα"><svg class="i16"><use href="#sel4"/></svg></button>
                <button aria-label="Ιδιότητες"><svg class="i16"><use href="#props"/></svg></button>
                <i class="space"></i>
                <button aria-label="Απόσταση"><svg class="i16"><use href="#dim"/></svg></button>
                <button aria-label="Γωνία"><svg class="i16"><use href="#phi"/></svg></button>
                <button aria-label="Εμβαδόν"><svg class="i16"><use href="#ebox"/></svg></button>
            </div>
            <div class="bottom-tabs">
                <button class="active"><svg class="i16"><use href="#list"/></svg>Εμφάνιση</button>
                <button><svg class="i16"><use href="#moment"/></svg>Αποτελέσματα</button>
                <button><svg class="i16"><use href="#eye"/></svg>Όψεις</button>
            </div>
        </section>

        <!-- center: model view -->
        <section class="model">
            <div class="prompt"><span>Επιλέξτε σημείο στην παρειά του 2ου κατακόρυφου στοιχείου ή κόμβο τέλους</span><span class="spin"><i class="tri-up"></i><i class="tri-down"></i></span></div>
            <div class="viewport">
                <svg viewBox="421 155 1007 477">
                    <!-- slabs -->
                    <g stroke="#2e9ac0" stroke-width="1">
                        <path d="M794 231L976 150H1050L1397 300V310L1172 403L1017 337L794 240z" fill="#a4deea"/>
                        <path d="M812 412L1005 333L1017 337L1172 403L967 488L812 421z" fill="#a4deea"/>
                        <path d="M1017 327L1172 393V403L1010 335z" fill="#66b2e0"/>
                        <path d="M798 237L999 155M1035 155L1385 306M814 419L1017 337M1172 393V403M1386 305L1397 300M967 477V488" fill="none" stroke="#2290b8" stroke-width=".8"/>
                        <path d="M794 231L976 150M1057 155L1388 296M794 231L1017 327L1172 393L1386 303M812 412L1005 333M812 412L967 477L1172 393" fill="none" stroke="#3a9ac8" stroke-width="1.800"/>
                        <path d="M950 470l17 7 22-8M1155 388l17 5 24-6" fill="none" stroke="#58a8d8" stroke-width="3"/>
                    </g>
                    <!-- columns -->
                    <path d="M599 315V511M796 240V428M967 488V632M1168 403V588M1385 312V497" stroke="#8ccc90" stroke-width="2"/>
                    <path d="M1017 155V327" stroke="#7cb8a8" stroke-width="1.500"/>
                    <path d="M599 316v24M796 236v20M1168 404v12M1385 308v18M1017 155v14" stroke="#80e8a0" stroke-width="3"/>
                    <!-- beams -->
                    <path d="M599 315l13-10 168-70 14-4M599 315l13 9 200 87" fill="none" stroke="#98c4ec" stroke-width="2"/>
                    <path d="M599 315l13-9M599 315l13 9M778 235l16-4" stroke="#98c4ec" stroke-width="4"/>
                    <!-- stair members -->
                    <g fill="none" stroke="#d2b88c" stroke-width="1.400">
                        <path d="M603 411L627 402L652 413L677 424M626 424L652 413L679 402M692 388L805 260M691 438L817 574"/>
                        <path d="M692 388q0-7-6-6-9 2-9 14 0 6 6 6 7-1 7-8 0-6-5-5-5 1-4 7 2 3 4 0"/>
                        <path d="M805 260q-2-12 6-14 10-2 11 6 0 7-7 7-6-1-5-6 2-5 6-3 3 3-1 5"/>
                        <path d="M691 438q0-8-5-12-7-3-8 5 1 8 7 7 5-2 2-7-4-2-4 2"/>
                        <path d="M817 574q5-2 9 1 6 5 4 12-4 6-8 2-4-7 1-10 5 0 4 6-2 2-3-1"/>
                    </g>
                    <path d="M601 413L626 424" stroke="#200818" stroke-width="2.500"/>
                    <path d="M825 522L851 510L877 522" fill="none" stroke="#d03030"/>
                    <!-- nodes -->
                    <path d="M593 312l12 6M593 318l12-6M789 228l10 6M789 234l10-6M806 408l12 6M806 414l12-6M621 399l12 6M621 405l12-6M621 421l12 6M621 427l12-6M647 410l12 6M647 416l12-6M673 399l12 6M673 405l12-6M673 421l12 6M673 427l12-6M813 243l10 6M813 249l10-6M962 471l10 5M962 476l10-5M1380 298l10 5M1380 303l10-5M1012 325l10 4M1012 330l10-4M1166 390l10 5M1166 395l10-5" stroke="#181020" stroke-width="1.200"/>
                    <g class="lbl">
                        <text x="600" y="309">K1</text><text x="797" y="225">K6</text><text x="819" y="240">ΚΛ3_5</text>
                        <text x="813" y="404">K18</text><text x="627" y="397">ΚΛ3_7</text><text x="679" y="397">ΚΛ3_4</text>
                        <text x="653" y="408">ΚΛ3_3</text><text x="627" y="418">ΚΛ3_6</text><text x="678" y="419">ΚΛ3_2</text>
                        <text x="967" y="468">K2</text><text x="1169" y="387">K5</text><text x="1386" y="293">K3</text><text x="1018" y="320">K19</text>
                        <text x="601" y="409">K21</text>
                        <text transform="translate(607 360) rotate(-90)">Y1_1_1</text>
                        <text transform="translate(607 459) rotate(-90)">Y1_1_1</text>
                        <text transform="translate(804 318) rotate(-90)">Y6</text>
                        <text transform="translate(1025 227) rotate(-90)">Y4</text>
                        <text transform="translate(1373 387) rotate(-90)">Y3</text>
                        <text transform="translate(1156 470) rotate(-90)">Y5</text>
                        <text transform="translate(954 555) rotate(-90)">Y2_1</text>
                    </g>
                    <use href="#slabmark" x="1080" y="253" width="32" height="20"/>
                    <use href="#slabmark" x="977" y="391" width="32" height="20"/>
                    <!-- picked node -->
                    <path d="M601 401v24M589 413h24" stroke="#111" stroke-width="2.200"/>
                    <circle cx="601" cy="413" r="4" fill="none" stroke="#222"/>
                    <rect x="586" y="407" width="27" height="11" rx="5" fill="none" stroke="#dd2030" stroke-width="1.600"/>
                    <path filter="url(#shadow)" d="M497 319l4-6 6 3 1 5 69 67 5-5 5 20-19-8 4-4-67-68h-5z" fill="#ee2222"/>
                    <!-- axes -->
                    <g fill="none" stroke-width="2">
                        <path d="M1399 183V164" stroke="#2030c8"/><path d="M1399 183l14-6" stroke="#d02020"/><path d="M1399 183l-14-6" stroke="#30d030"/>
                    </g>
                    <g class="axis"><text x="1395" y="167" fill="#2030c8">Z</text><text x="1412" y="180" fill="#d02020">X</text><text x="1379" y="180" fill="#30d030">Y</text></g>
                </svg>
            </div>
        </section>

        <!-- left: navigation panel -->
        <section class="panel navigation">
            <header class="title"><h2>Πλοήγηση</h2><button aria-label="Μενού"><svg class="i10"><use href="#caret"/></svg></button><button aria-label="Καρφίτσωμα"><svg class="i10"><use href="#pin"/></svg></button><button aria-label="Κλείσιμο"><svg class="i10"><use href="#x"/></svg></button></header>
            <div class="toolbar filter-bar">
                <button>Επιλεγμένα</button><button class="on">Όλα</button><i class="sep"></i>
                <button class="tbl-btn on"><svg class="i18"><use href="#tbl"/></svg><b>1</b></button>
                <button class="tbl-btn"><svg class="i18"><use href="#tbl"/></svg><b>2</b></button>
            </div>
            <div class="tree">
                <ul>
                    <li><a href="#" class="node"><svg class="tw"><use href="#tw-closed"/></svg><span class="text"><svg class="fd"><use href="#folder-b"/></svg>Βιβλιοθήκες</span></a></li>
                    <li><a href="#" class="node"><svg class="tw"><use href="#tw-open"/></svg><span class="text"><svg class="fd"><use href="#folder"/></svg>Δεδομένα</span></a>
                        <ul>
                            <li><a href="#" class="node"><svg class="tw"><use href="#tw-open"/></svg><span class="text"><svg class="fd"><use href="#folder"/></svg>Κτήριο</span></a>
                                <ul>
                                    <li><a href="#" class="node"><i class="tw"></i><span class="text"><svg class="fd"><use href="#doc"/></svg>Γενικά Κτηρίου</span></a></li>
                                    <li><a href="#" class="node"><i class="tw"></i><span class="text"><svg class="fd"><use href="#doc"/></svg>Περασιές Χρήστη</span></a></li>
                                </ul>
                            </li>
                            <li><a href="#" class="node"><svg class="tw"><use href="#tw-closed"/></svg><span class="text"><svg class="fd"><use href="#folder"/></svg>Φορτίσεις</span></a></li>
                            <li><a href="#" class="node"><svg class="tw"><use href="#tw-closed"/></svg><span class="text"><svg class="fd"><use href="#folder"/></svg>Δεδομένα Ελέγχων</span></a></li>
                            <li><a href="#" class="node"><svg class="tw"><use href="#tw-closed"/></svg><span class="text"><svg class="fd"><use href="#folder"/></svg>Κόμβοι</span></a></li>
                            <li><a href="#" class="node"><svg class="tw"><use href="#tw-closed"/></svg><span class="text"><svg class="fd"><use href="#folder"/></svg>Οπλισμένο Σκυρόδεμα</span></a></li>
                            <li><a href="#" class="node"><svg class="tw"><use href="#tw-closed"/></svg><span class="text"><svg class="fd"><use href="#folder"/></svg>Μεταλλικά</span></a></li>
                            <li><a href="#" class="node"><svg class="tw"><use href="#tw-closed"/></svg><span class="text"><svg class="fd"><use href="#folder"/></svg>Σύμμεικτα</span></a></li>
                            <li><a href="#" class="node"><svg class="tw"><use href="#tw-closed"/></svg><span class="text"><svg class="fd"><use href="#folder"/></svg>Φέρουσα Τοιχοποιία</span></a></li>
                            <li><a href="#" class="node"><svg class="tw"><use href="#tw-closed"/></svg><span class="text"><svg class="fd"><use href="#folder"/></svg>Ξύλινα</span></a></li>
                            <li><a href="#" class="node"><svg class="tw"><use href="#tw-open"/></svg><span class="text"><svg class="fd"><use href="#folder"/></svg>Πλασματικά</span></a>
                                <ul>
                                    <li><a href="#" class="node selected"><i class="tw"></i><span class="text"><svg class="fd"><use href="#member2"/></svg>Συνδεσμολογία-Διατομή<svg class="pointer" viewBox="0 0 76 26"><path filter="url(#shadow)" d="M72 7H62v2H20V2L2 11l18 9v-7h42v3h10z" fill="#ee2222"/></svg></span></a></li>
                                    <li><a href="#" class="node"><i class="tw"></i><span class="text"><svg class="fd"><use href="#support"/></svg>Συνθήκες Στήριξης</span></a></li>
                                    <li><a href="#" class="node"><i class="tw"></i><span class="text"><svg class="fd"><use href="#doc"/></svg>Αδρανειακά Μεγέθη</span></a></li>
                                </ul>
                            </li>
                            <li><a href="#" class="node"><svg class="tw"><use href="#tw-closed"/></svg><span class="text"><svg class="fd"><use href="#folder"/></svg>Πεπερασμένα Στοιχεία Πλακών</span></a></li>
                        </ul>
                    </li>
                    <li><a href="#" class="node"><svg class="tw"><use href="#tw-open"/></svg><span class="text"><svg class="fd"><use href="#folder"/></svg>Αποτελέσματα</span></a>
                        <ul>
                            <li><a href="#" class="node"><svg class="tw"><use href="#tw-open"/></svg><span class="text"><svg class="fd"><use href="#folder"/></svg>Ανάλυση</span></a>
                                <ul>
                                    <li><a href="#" class="node"><svg class="tw"><use href="#tw-open"/></svg><span class="text"><svg class="fd"><use href="#folder"/></svg>Γενικοί Έλεγχοι</span></a>
                                        <ul>
                                            <li><a href="#" class="node"><i class="tw"></i><span class="text"><svg class="fd"><use href="#okpic"/></svg>Σύνοψη</span></a></li>
                                            <li><a href="#" class="node"><i class="tw"></i><span class="text"><svg class="fd"><use href="#doc"/></svg>Συνοπτική Επαλήθευση Διαδόσεων Μαζών</span></a></li>
                                        </ul>
                                    </li>
                                    <li></li>
                                </ul>
                            </li>
                            <li></li>
                        </ul>
                    </li>
                </ul>
                <i class="thumb high"></i>
            </div>
        </section>

        <!-- center: worksheet -->
        <section class="panel worksheet">
            <header class="title"><h2>Παράθυρο Εργασίας 1</h2><button aria-label="Μενού"><svg class="i10"><use href="#caret"/></svg></button><button aria-label="Καρφίτσωμα"><svg class="i10"><use href="#pin"/></svg></button><button aria-label="Κλείσιμο"><svg class="i10"><use href="#x"/></svg></button></header>
            <div class="toolbar filter-bar"><button>Επιλεγμένα</button><button class="on">Όλα</button></div>
            <div class="sheet">
                <table class="members">
                    <colgroup><col class="w35"><col class="w50"><col class="w50"><col class="w65"><col class="w65"><col class="w80"><col class="w50"></colgroup>
                    <thead>
                        <tr><th rowspan="3">α/α</th><th rowspan="3">Όνομα</th><th rowspan="3">Στάθμη</th><th colspan="2">Κόμβοι</th><th rowspan="3">Διατομή</th><th rowspan="2">L</th></tr>
                        <tr><th rowspan="2">Αρχής</th><th rowspan="2">Τέλους</th></tr>
                        <tr><th>[m]</th></tr>
                    </thead>
                    <tbody>
                        <tr class="edit"><th>0</th><td>Δσ4</td><td>Σ1</td><td>K21-Σ1</td><td>ΚΛ3_7-Σ1</td><td>Άκαμπτη Ράβ</td><td>0.51</td></tr>
                        <tr><th>1</th><td>ΚΛ3_1</td><td>Σ1</td><td>ΚΛ3_2-Σ1</td><td>ΚΛ3_1-Θ</td><td>StepsX</td><td>3.35</td></tr>
                        <tr><th>2</th><td>ΚΛ3_2</td><td>Σ1</td><td>ΚΛ3_3-Σ1</td><td>ΚΛ3_2-Σ1</td><td>LandY</td><td>0.50</td></tr>
                        <tr><th>3</th><td>ΚΛ3_3</td><td>Σ1</td><td>ΚΛ3_4-Σ1</td><td>ΚΛ3_3-Σ1</td><td>LandX</td><td>0.50</td></tr>
                        <tr><th>4</th><td>ΚΛ3_4</td><td>Σ1</td><td>ΚΛ3_5-Σ1</td><td>ΚΛ3_4-Σ1</td><td>StepsX</td><td>3.09</td></tr>
                        <tr><th>5</th><td>ΚΛ3_5</td><td>Σ1</td><td>ΚΛ3_3-Σ1</td><td>ΚΛ3_6-Σ1</td><td>LandX</td><td>0.50</td></tr>
                        <tr><th>6</th><td>ΚΛ3_6</td><td>Σ1</td><td>ΚΛ3_3-Σ1</td><td>ΚΛ3_7-Σ1</td><td>LandY</td><td>0.50</td></tr>
                    </tbody>
                </table>
            </div>
            <div class="bottom-tabs">
                <button><svg class="i16"><use href="#clipboard"/></svg>Αποτελέσματα</button>
                <button class="active tbl-btn"><svg class="i18"><use href="#tbl"/></svg><b>1</b>Παράθυρο Εργασίας 1</button>
                <button class="tbl-btn"><svg class="i18"><use href="#tbl"/></svg><b>2</b>Παράθυρο Εργασίας 2</button>
                <button><svg class="i16"><use href="#home"/></svg>Βοήθεια</button>
            </div>
        </section>

        <!-- right: add elements -->
        <aside class="panel elements">
            <header class="title"><h2>Προσθήκη Στοιχείων</h2><button aria-label="Σύμπτυξη" class="tri-left"></button></header>
            <div class="toolbar elem-bar">
                <button><svg class="i14"><use href="#col"/></svg>Κατ.</button>
                <button class="on"><svg class="i14"><use href="#hor"/></svg>Ορ.</button>
                <button><svg class="i14"><use href="#roof"/></svg>Τεγ.</button>
                <button><svg class="i14"><use href="#conn"/></svg>Συνδ.</button>
                <i class="sep"></i>
                <button><svg class="i14"><use href="#props-c"/></svg>Αλλαγή</button>
                <i class="sep"></i>
                <button><svg class="i14"><use href="#add"/></svg>Νέα</button>
                <button disabled><svg class="i14"><use href="#add-o"/></svg>Αντιγραφή</button>
                <i class="sep"></i>
                <button aria-label="Ζουμ όλα"><svg class="i16"><use href="#zoomall"/></svg></button>
                <i class="sep"></i>
                <span class="more">»</span>
            </div>
            <div class="well preview">
                <svg viewBox="0 0 70 70"><path d="M2 2h56M2 2v56" fill="none" stroke="#b83030" stroke-width="1.200"/><text x="52" y="16" fill="#c03030" font-size="14">2</text><text transform="translate(16 61) rotate(-90)" fill="#d03030" font-size="13">3</text></svg>
            </div>
            <div class="well insert">
                <button class="beam">Εισαγωγή Δοκού<i class="h tl"></i><i class="h tr"></i><i class="h bl"></i><i class="h br"></i><i class="h red ml"></i><i class="h red mr"></i></button>
            </div>
            <div class="form">
                <div class="combo double"><svg><use href="#diag"/></svg><label for="kind"><b>Πλασματικές</b></label><select id="kind"><option>Πλασματικές διατομές ειδικών χρήσεων</option></select></div>
                <div class="side"><label><input type="checkbox">φ(°)=</label><span class="num"><input type="text" value="0.0" aria-label="Γωνία" disabled><span class="spin"><i class="tri-up"></i><i class="tri-down"></i></span></span></div>
                <div class="combo"><svg><use href="#diag"/></svg><select aria-label="Φίλτρο 1"><option>Όλες</option></select></div>
                <div class="side"><label><input type="checkbox">Αλλαγή Πάνω</label></div>
                <div class="combo"><svg><use href="#diag"/></svg><select aria-label="Φίλτρο 2"><option>Όλες</option></select></div>
                <div class="side"><label><input type="checkbox">Αλλαγή Κάτω</label></div>
            </div>
            <div class="sorting">
                <label><input type="checkbox" checked>Α-&gt;Ω</label>
                <label><input type="checkbox">Ω-&gt;Α</label>
                <label><input type="checkbox">Χρησιμοποιούμενες Πρώτα</label>
                <input type="text" aria-label="Αναζήτηση">
            </div>
            <div class="well catalog">
                <table>
                    <colgroup><col class="w15"><col class="w18"><col class="w257"><col class="w18"><col class="w70"><col class="w50"><col class="w25"></colgroup>
                    <thead><tr><th></th><th>Δ</th><th>Όνομα</th><th>Ο</th><th>Διάταξη</th><th>ro(o/oo)</th><th>Ιδ</th></tr></thead>
                    <tbody>
                        <tr class="current"><th></th><td><button>&lt;</button></td><td>Άκαμπτη Ράβδος</td><td></td><td></td><td></td><td><button>...</button></td></tr>
                        <tr><th></th><td></td><td>Άκαμπτη Ράβδος Χωρίς Στρεπτική Αντίσταση</td><td></td><td></td><td></td><td><button>...</button></td></tr>
                        <tr><th></th><td></td><td>Διατομή Κοιτόστρωσης</td><td></td><td></td><td></td><td><button>...</button></td></tr>
                        <tr><th></th><td></td><td>Διατομή Συρραφής Τοιχώματος</td><td></td><td></td><td></td><td><button>...</button></td></tr>
                        <tr><th></th><td></td><td>Ράβδος Άνευ Δυσκαμψίας</td><td></td><td></td><td></td><td><button>...</button></td></tr>
                    </tbody>
                </table>
                <svg class="callout"><use href="#red-arrow" filter="url(#shadow)"/></svg>
            </div>
            <div class="splitter"><i></i></div>
            <div class="toolbar status-bar">
                <button aria-label="Πληροφορίες"><svg class="i16"><use href="#info"/></svg></button>
                <button aria-label="Στρώσεις"><svg class="i16"><use href="#layers"/></svg></button>
                <button aria-label="Προσθήκη στοιχείων" class="on"><svg class="i16"><use href="#sec-add"/></svg></button>
                <button aria-label="Προσθήκη πλακών"><svg class="i16"><use href="#slab-add"/></svg></button>
                <button aria-label="Καμπύλες"><svg class="i16"><use href="#curve"/></svg></button>
                <button aria-label="Διάγραμμα"><svg class="i16"><use href="#chart"/></svg></button>
                <button aria-label="CR"><svg class="i16"><use href="#cr"/></svg></button>
                <button aria-label="Αναφορά"><svg class="i16"><use href="#page"/></svg></button>
                <button aria-label="Φύλλο"><svg class="i16"><use href="#sheet"/></svg></button>
                <button aria-label="Χρώματα"><svg class="i16"><use href="#color"/></svg></button>
                <button aria-label="Πλαίσιο"><svg class="i16"><use href="#box"/></svg></button>
                <span class="more">»</span>
            </div>
        </aside>
    </main>
</body>
</html>
```
FILE: styles.css
```css
* {
    margin: 0;
    padding: 0;
    box-sizing: border-box;
}

body {
    height: 100vh;
    display: flex;
    flex-direction: column;
    overflow: hidden;
    background: #e6e6e6;
    color: #444;
    font-family: Roboto, 'Noto Sans', sans-serif;
    font-size: 12px;
    line-height: 16px;
}

button, input, select {
    font: inherit;
    color: inherit;
    background: none;
    border: 0;
}

a {
    color: inherit;
    text-decoration: none;
}

ul {
    list-style: none;
}

svg {
    flex: none;
}

.defs { position: absolute; }
.symbols { display: none; }
.i6 { width: 6px; height: 6px; }
.i10 { width: 10px; height: 10px; }
.i14 { width: 14px; height: 14px; }
.i16 { width: 16px; height: 16px; }
.i18 { width: 18px; height: 18px; }
.i24 { width: 24px; height: 24px; }
.i32 { width: 32px; height: 32px; }

input[type="checkbox"] {
    appearance: none;
    flex: none;
    width: 11px;
    height: 11px;
    background: #fff;
    border: 1px solid #9a9a9a;
    display: grid;
    place-items: center;
}

input[type="checkbox"]:checked::before {
    content: "";
    width: 3px;
    height: 6px;
    border: solid #555;
    border-width: 0 1px 1px 0;
    transform: rotate(40deg);
}

input[type="checkbox"]:disabled {
    opacity: 0.5;
}

/* tab strip */
.tabs {
    flex: none;
    height: 23px;
    display: flex;
    align-items: stretch;
    background: #2b579a;
    color: #fff;
    font: 11px/20px 'Noto Sans', sans-serif;
    white-space: nowrap;
    padding-left: 4px;
}

.tabs a {
    padding: 0 17px 0 16px;
}

.tabs a:first-child {
    padding-right: 25px;
}

.tabs a.active {
    background: #f0f0f0;
    color: #444;
}

.tabs a.ctx {
    padding: 0 16px 0 15px;
    background: #264b85;
}

.tell-me {
    display: flex;
    align-items: center;
    gap: 10px;
    padding: 0 0 3px 20px;
    color: #b8c8e4;
}

.app-name {
    margin-left: auto;
}

.style-btn {
    padding: 0 4px 3px 8px;
}

/* ribbon */
.ribbon {
    flex: none;
    height: 98px;
    display: flex;
    padding-top: 2px;
    background: #f0f0f0;
    border-bottom: 1px solid #d0d0d0;
}

.group {
    display: flex;
    flex-direction: column;
    margin-bottom: 3px;
    border-right: 1px solid #d6d6d6;
    white-space: nowrap;
}

.group-body {
    flex: 1;
    min-height: 0;
    display: flex;
    padding: 3px 8px 2px;
}

.group h3 {
    flex: none;
    font-size: 12px;
    line-height: 16px;
    font-weight: normal;
    color: #666;
    text-align: center;
    padding-bottom: 1px;
}

.g-undo { width: 138px; }
.g-view { width: 123px; }
.g-dir { width: 121px; }
.g-straight { width: 414px; }
.g-round { width: 340px; }
.g-back { width: 130px; }

.g-undo .group-body {
    gap: 4px;
    padding-left: 10px;
}

.g-round .group-body {
    padding-left: 9px;
    padding-right: 4px;
}

.big {
    display: flex;
    flex-direction: column;
    align-items: center;
    padding-top: 9px;
    line-height: 15px;
    text-align: center;
}

.big svg {
    margin-bottom: 5px;
}

.big:disabled {
    color: #b0b0a8;
}

.g-dir .big {
    flex: 1;
    padding-top: 0;
    display: block;
}

.g-dir .big svg {
    display: block;
    margin: 2px auto 3px;
}

.g-back .group-body {
    justify-content: center;
}

.g-back .big {
    display: block;
    padding-top: 0;
}

.g-back .big svg {
    display: block;
    margin: 0 auto 6px;
}

.pressed {
    background: #c5c5c5;
    border: 1px solid #2b579a;
    color: #555;
}

.chev {
    width: 5px;
    height: 5px;
    border: solid currentColor;
    border-width: 0 1px 1px 0;
    transform: rotate(45deg);
}

.stack {
    display: flex;
    flex-direction: column;
    justify-content: space-around;
    padding: 2px 0;
}

.stack label {
    display: flex;
    align-items: center;
    gap: 5px;
}

.g-view .stack {
    padding-left: 1px;
}

.stack.two {
    padding: 3px 0 7px;
}

.stack.split {
    margin-left: 8px;
    padding-left: 7px;
    border-left: 1px solid #ddd;
}

.stack.two.split {
    padding-left: 3px;
}

.stack.grow {
    flex: 1;
    margin-left: 3px;
}

.small {
    display: flex;
    align-items: center;
    gap: 3px;
    height: 22px;
}

.small.pressed {
    padding-left: 2px;
}

/* docked panels */
.workspace {
    flex: 1;
    min-height: 0;
    display: grid;
    grid-template-columns: 416px 1fr 482px;
    grid-template-rows: 53fr 47fr;
    column-gap: 5px;
    padding-bottom: 1px;
}

.display { grid-area: 1 / 1; }
.navigation { grid-area: 2 / 1; }
.model { grid-area: 1 / 2; }
.worksheet { grid-area: 2 / 2; }
.elements { grid-area: 1 / 3 / 3 / 4; }

.panel {
    min-height: 0;
    min-width: 0;
    display: flex;
    flex-direction: column;
}

.title {
    flex: none;
    display: flex;
    align-items: center;
    height: 45px;
    padding: 8px 3px 0 4px;
}

.display .title {
    height: 40px;
    padding-top: 3px;
}

.worksheet .title {
    padding-right: 0;
}

.title h2 {
    flex: 1;
    font: 20px/28px 'Noto Sans', sans-serif;
    color: #505050;
}

.title button {
    width: 19px;
    display: grid;
    place-items: center;
}

.toolbar {
    flex: none;
    display: flex;
    align-items: center;
    background: #f0f0f0;
}

.toolbar button {
    display: flex;
    align-items: center;
    height: 19px;
}

.toolbar button.on {
    background: #cfcfcf;
}

.sep {
    width: 1px;
    height: 18px;
    background: #d4d4d4;
}

.level-bar {
    height: 26px;
    padding-left: 11px;
    gap: 3px;
}

.level-bar button, .cube-bar button {
    width: 19px;
    justify-content: center;
}

.level-bar select {
    appearance: none;
    width: 65px;
    height: 21px;
    margin-right: 2px;
    padding-left: 4px;
    border: 1px solid #b4b4b4;
    background: url("data:image/svg+xml,%3Csvg xmlns='http://www.w3.org/2000/svg' viewBox='0 0 8 5'%3E%3Cpath d='M0 0h8L4 5z' fill='%23555'/%3E%3C/svg%3E") no-repeat right 5px center / 5px 3px #fff;
}

.level-bar .space { width: 5px; }

.cube-bar {
    height: 26px;
    padding-left: 32px;
    gap: 3px;
}

.cube-bar .space { width: 11px; }

/* trees */
.tree {
    position: relative;
    flex: 1;
    min-height: 0;
    overflow: hidden;
    background: #fff;
    border: 1px solid #c8c8c8;
    font-size: 11px;
    line-height: 17px;
}

.tree.checks > ul {
    margin-top: -6px;
}

.tree li {
    position: relative;
}

.tree ul ul {
    margin-left: 17px;
}

.tree ul ul > li::before {
    content: "";
    position: absolute;
    left: 10px;
    top: 0;
    bottom: 0;
    border-left: 1px solid #d0d0d0;
}

.tree ul ul > li:last-child::before {
    bottom: auto;
    height: 9px;
}

.tree ul ul > li:not(:empty)::after {
    content: "";
    position: absolute;
    left: 10px;
    top: 8px;
    width: 8px;
    border-top: 1px solid #d0d0d0;
}

.node {
    display: flex;
    align-items: center;
    height: 17px;
    padding-left: 6px;
    white-space: nowrap;
}

.tw {
    position: relative;
    z-index: 1;
    width: 9px;
    height: 9px;
    margin-right: 6px;
}

.node .text {
    flex: 1;
    display: flex;
    align-items: center;
    gap: 2px;
}

.checks .text {
    padding-left: 7px;
    gap: 3px;
}

.fd {
    width: 16px;
    height: 14px;
}

.node.selected .text {
    background: #f0f0f0;
    margin-right: 20px;
}

.node.off {
    color: #a4a898;
}

.pointer {
    width: 76px;
    height: 26px;
    margin: -3px 0 -6px 14px;
}

.thumb {
    position: absolute;
    right: 3px;
    top: 31%;
    bottom: 18%;
    width: 2px;
    background: #9a9a9a;
}

.thumb.high {
    top: 5%;
    bottom: 48%;
}

.select-bar {
    height: 27px;
    padding-left: 11px;
    gap: 6px;
}

.select-bar .space { width: 5px; }

.bottom-tabs {
    flex: none;
    height: 24px;
    display: flex;
    border-bottom: 1px solid #c0c0c0;
    border-top: 1px solid #c0c0c0;
}

.bottom-tabs button {
    display: flex;
    align-items: center;
    gap: 1px;
    padding: 0 4px 0 5px;
    white-space: nowrap;
}

.bottom-tabs .active {
    background: #fff;
    border: solid #b0b0b0;
    border-width: 0 1px 1px 0;
}

.filter-bar {
    height: 26px;
    padding-left: 9px;
    gap: 2px;
}

.filter-bar button {
    padding: 0 3px;
}

.filter-bar .sep {
    margin: 0 3px;
}

.filter-bar .tbl-btn {
    padding: 0 1px;
}

.tbl-btn b {
    margin-left: -7px;
    margin-top: 7px;
    color: #a01818;
    font-size: 11px;
    line-height: 11px;
}

/* model view */
.model {
    min-height: 0;
    display: flex;
    flex-direction: column;
}

.prompt {
    flex: none;
    height: 32px;
    display: flex;
    justify-content: space-between;
    background: #f0f0f0;
    border-top: 1px solid #d0d0d0;
    border-bottom: 3px solid #e0e0e0;
    color: #707070;
    font: 13px/16px 'Noto Sans', sans-serif;
}

.spin {
    display: flex;
    flex-direction: column;
    justify-content: space-around;
    padding: 2px 5px;
}

.tri-up, .tri-down {
    border: 4px solid transparent;
    border-top: 0;
    border-bottom: 6px solid #999;
}

.tri-down {
    border-bottom: 0;
    border-top: 6px solid #999;
}

.viewport {
    flex: 1;
    min-height: 0;
    background: #fff;
    border: 1px solid #777;
    border-top: 2px solid #666;
    overflow: hidden;
}

.viewport svg {
    display: block;
    width: 100%;
    height: 100%;
}

.lbl text {
    font: 8px 'Liberation Sans', sans-serif;
    fill: #222;
}

.axis text {
    font: bold 9px 'Liberation Sans', sans-serif;
}

/* worksheet */
.sheet {
    flex: 1;
    min-height: 0;
    overflow: hidden;
    background: #f0f0f0;
    border: 1px solid #777;
}

.worksheet .bottom-tabs {
    border-top: 0;
}

.worksheet .bottom-tabs button {
    gap: 2px;
    padding-right: 3px;
}

table {
    table-layout: fixed;
    border-collapse: collapse;
    white-space: nowrap;
    color: #111;
}

.members {
    width: 396px;
    margin: -1px 0 0 -1px;
    font: 11px/14px 'Noto Sans', sans-serif;
}

.w15 { width: 15px; }
.w18 { width: 18px; }
.w25 { width: 25px; }
.w35 { width: 35px; }
.w50 { width: 50px; }
.w65 { width: 65px; }
.w70 { width: 70px; }
.w80 { width: 80px; }
.w257 { width: 257px; }

th {
    background: #f0f0f0;
    border: 1px solid #222;
    font-weight: normal;
}

td {
    background: #fff;
    border: 1px solid #666;
    overflow: hidden;
}

.members thead tr {
    height: 22px;
}

.members tbody tr {
    height: 20px;
}

.members td, .members tbody th {
    padding: 0 2px 2px;
}

.members tbody th {
    text-align: right;
}

.members td:nth-child(n+3) {
    color: #808080;
}

.members td:nth-child(4), .members td:nth-child(5) {
    text-align: center;
}

.members .edit td:nth-child(4), .members .edit td:nth-child(5) {
    color: #111;
}

.members td:last-child {
    text-align: right;
}

/* add elements */
.elements {
    padding-left: 4px;
    border-left: 1px solid #ccc;
}

.elements .title {
    height: 46px;
    padding: 4px 6px 0 2px;
}

.title .tri-left {
    align-self: flex-start;
    width: 5px;
    border: 4px solid transparent;
    border-left: 0;
    border-right: 5px solid #666;
    margin-top: 4px;
}

.elem-bar {
    height: 25px;
    margin-bottom: 2px;
    padding-left: 9px;
    gap: 1px;
    font-size: 12px;
}

.elem-bar button {
    gap: 3px;
    padding: 0 4px;
}

.elem-bar .sep {
    margin: 0 3px;
}

.elem-bar button:disabled {
    color: #b4b4b4;
}

.more {
    margin-left: auto;
    padding-right: 4px;
    font-size: 14px;
}

.well {
    border: 1px solid #666;
    background: #fff;
}

.preview {
    flex: none;
    height: 221px;
    display: grid;
    place-items: center;
    margin-bottom: 4px;
    font-family: 'Liberation Sans', sans-serif;
}

.preview svg {
    width: 70px;
    height: 70px;
    margin-top: 66px;
    margin-left: 64px;
}

.insert {
    flex: none;
    height: 45px;
    display: grid;
    place-items: center;
}

.beam {
    position: relative;
    width: 203px;
    height: 33px;
    padding-top: 14px;
    border: 1px solid #3c8ca8;
    color: #222;
}

.h {
    position: absolute;
    width: 9px;
    height: 9px;
    background: #bc8c48;
}

.red { background: #ee2020; }
.tl { left: -5px; top: -5px; }
.tr { right: -5px; top: -5px; }
.bl { left: -5px; bottom: -5px; }
.br { right: -5px; bottom: -5px; }
.ml { left: -5px; top: 11px; }
.mr { right: -5px; top: 11px; }

.form {
    flex: none;
    display: grid;
    grid-template-columns: 1fr 115px;
    gap: 5px;
    padding: 4px 0 3px 1px;
}

.combo {
    height: 34px;
    display: grid;
    grid-template-columns: 44px 1fr;
    align-items: center;
    background: #fdfdfd;
    border: 1px solid #c8c8c8;
    border-radius: 4px;
    color: #111;
}

.combo svg {
    grid-row: 1 / 3;
    width: 30px;
    height: 24px;
    margin-left: 6px;
}

.combo select {
    appearance: none;
    height: 100%;
    background: url("data:image/svg+xml,%3Csvg xmlns='http://www.w3.org/2000/svg' viewBox='0 0 8 5'%3E%3Cpath d='M0 0h8L4 5z' fill='%23666'/%3E%3C/svg%3E") no-repeat right 4px center / 8px 5px;
}

.combo:not(.double) select {
    grid-row: 1 / 3;
}

.double {
    padding-top: 1px;
}

.combo label, .double select {
    line-height: 15px;
}

.side {
    display: flex;
    align-items: flex-start;
    justify-content: space-between;
    padding-top: 3px;
    color: #333;
    font-size: 11px;
}

.side label, .sorting label {
    display: flex;
    align-items: center;
    gap: 2px;
}

.side input[type="checkbox"], .sorting input[type="checkbox"] {
    width: 13px;
    height: 13px;
    border: 1px solid #777;
    border-radius: 3px;
}

.sorting input[type="checkbox"]:checked {
    background: #2b579a;
    border-color: #2b579a;
}

.sorting input[type="checkbox"]:checked::before {
    border-color: #fff;
}

.num {
    display: flex;
}

.num input {
    width: 53px;
    height: 20px;
    padding-right: 2px;
    border: 1px solid #888;
    text-align: right;
    font-size: 12px;
    color: #888;
}

.num .spin {
    padding: 2px 3px;
    border: solid #bbb;
    border-width: 1px 0;
}

.num .tri-up, .num .tri-down {
    border-width: 3px;
}

.num .tri-up { border-top: 0; }
.num .tri-down { border-bottom: 0; }

.sorting {
    flex: none;
    display: flex;
    align-items: center;
    gap: 22px;
    height: 27px;
    font-size: 11px;
    color: #333;
}

.sorting > input {
    flex: 1;
    min-width: 0;
    height: 24px;
    margin-left: 9px;
    background: #fff;
    border: 1px solid #777;
}

.catalog {
    position: relative;
    flex: 1;
    min-height: 0;
    background: #f0f0f0;
}

.catalog table {
    width: 454px;
    margin: -1px 0 0 -1px;
}

.catalog thead tr {
    height: 22px;
}

.catalog tbody tr {
    height: 18px;
}

.catalog tr > * {
    line-height: 15px;
}

.catalog td:nth-child(3) {
    padding-left: 2px;
}

.catalog .current td:nth-child(3) {
    color: #d03020;
    outline: 2px solid #1c0c14;
    outline-offset: -2px;
}

.catalog td button {
    display: block;
    width: 100%;
    height: 15px;
    background: #fdfdfd;
    border: 1px solid #bbb;
    border-radius: 3px;
    line-height: 11px;
}

.callout {
    position: absolute;
    left: -73px;
    top: 19px;
    width: 96px;
    height: 26px;
    overflow: visible;
}

.splitter {
    flex: none;
    height: 8px;
    display: grid;
    place-items: center;
    background: #cdcdcd;
}

.splitter i {
    width: 58px;
    height: 3px;
    background: repeating-linear-gradient(90deg, #fff 0 3px, #999 3px 6px);
}

.status-bar {
    height: 31px;
    justify-content: flex-end;
    gap: 2px;
}

.status-bar button {
    width: 24px;
    height: 29px;
    justify-content: center;
}

.status-bar .more {
    margin-left: 9px;
}
```
